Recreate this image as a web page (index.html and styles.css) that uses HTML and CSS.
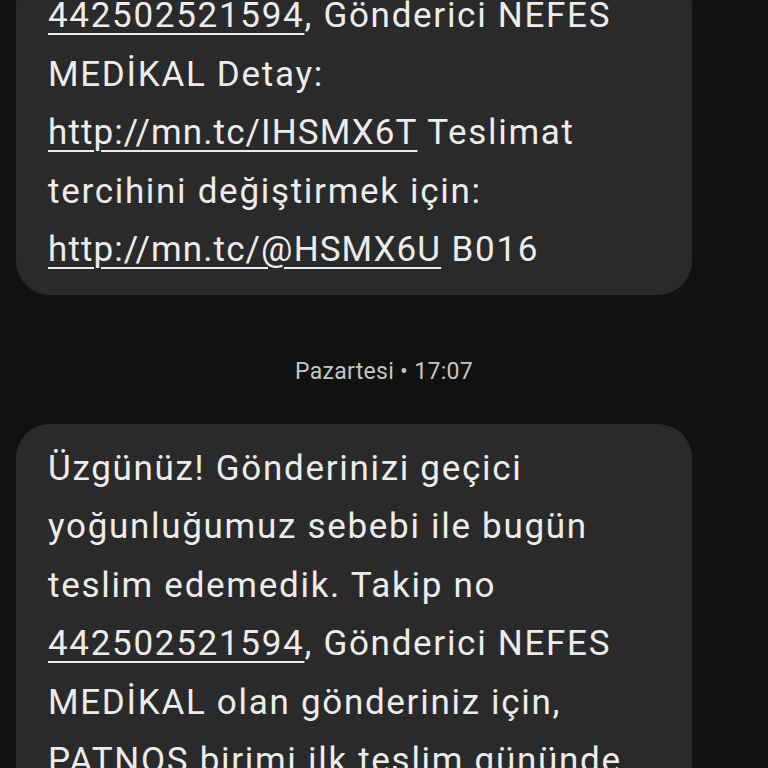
FILE: index.html
```html
<!DOCTYPE html>
<html lang="tr">
<head>
<meta charset="utf-8">
<link rel="stylesheet" href="styles.css">
</head>
<body>
<div class="thread">
  <div class="bubble first">
    <span class="link">442502521594</span>, Gönderici NEFES<br>
    MEDİKAL Detay:<br>
    <span class="link url">http://mn.tc/IHSMX6T</span> Teslimat<br>
    tercihini değiştirmek için:<br>
    <span class="link url">http://mn.tc/@HSMX6U</span> B016
  </div>
  <div class="stamp">Pazartesi • 17:07</div>
  <div class="bubble">
    Üzgünüz! Gönderinizi geçici<br>
    yoğunluğumuz sebebi ile bugün<br>
    teslim edemedik. Takip no<br>
    <span class="link">442502521594</span>, Gönderici NEFES<br>
    MEDİKAL olan gönderiniz için,<br>
    PATNOS birimi ilk teslim gününde
  </div>
</div>
</body>
</html>
```
FILE: styles.css
```css
html, body {
  margin: 0;
  padding: 0;
  background: #111111;
  height: 768px;
  overflow: hidden;
}
.thread {
  display: flex;
  flex-direction: column;
  align-items: flex-start;
  padding: 0 16px;
  margin-top: -29px;
}
.bubble {
  box-sizing: border-box;
  width: 676px;
  background: #2a2a2a;
  border-radius: 34px;
  padding: 16px 32px 15px;
  color: #ececec;
  font-family: Roboto, "Noto Sans", sans-serif;
  font-size: 35px;
  letter-spacing: 1.7px;
  line-height: 58.5px;
  white-space: nowrap;
}
.link {
  text-decoration: underline;
  text-decoration-thickness: 2px;
  text-underline-offset: 6px;
}
.url {
  letter-spacing: 1.1px;
}
.stamp {
  align-self: center;
  margin: 63px 0 38px;
  color: #c4c4c4;
  font-family: Roboto, "Noto Sans", sans-serif;
  font-size: 23px;
  letter-spacing: 0.3px;
  line-height: 28px;
}
```
